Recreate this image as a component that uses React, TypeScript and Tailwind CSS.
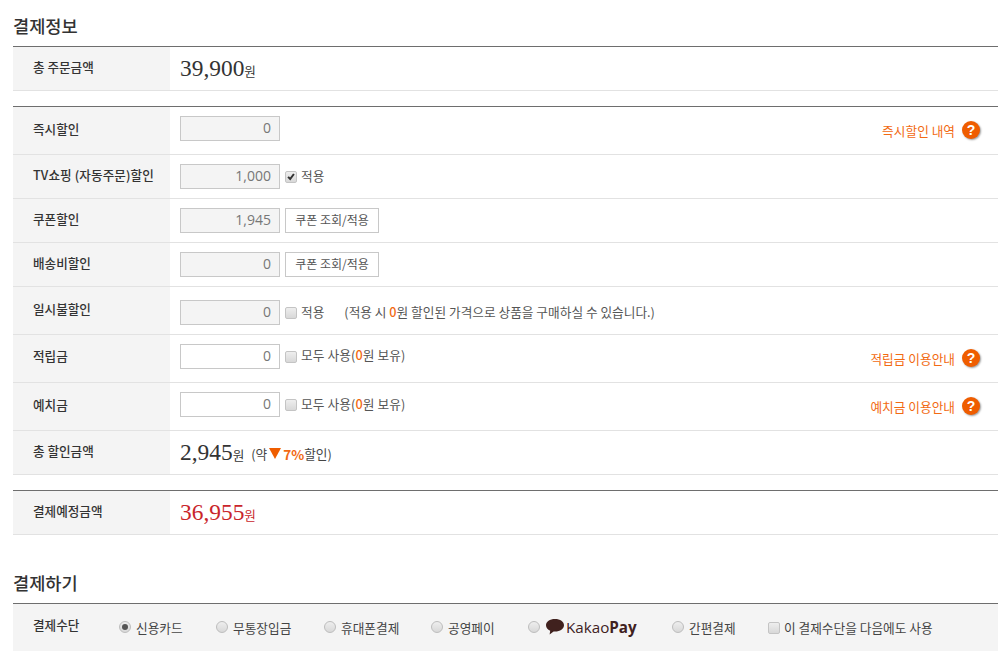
import React from 'react';

const FONT = "font-['Noto_Sans_CJK_KR','Noto_Sans',sans-serif]";

const Row = ({
  label,
  h,
  lift = '-mt-[3px]',
  shift = '',
  right,
  children,
}: {
  label: string;
  h: string;
  lift?: string;
  shift?: string;
  right?: React.ReactNode;
  children: React.ReactNode;
}) => (
  <div className={`flex ${h} border-b border-[#e2e2e2]`}>
    <div className="w-[157px] shrink-0 bg-[#f4f4f4] pl-[20px] pt-[1px] flex items-center text-[12.6px] font-medium text-[#333]">
      <span className={lift}>{label}</span>
    </div>
    <div className="flex-1 flex items-center pl-[10px] pr-[18px] min-w-0">
      <div className={`flex items-center ${shift}`}>{children}</div>
      {right}
    </div>
  </div>
);

const Amount = ({ value, disabled = true }: { value: string; disabled?: boolean }) => (
  <div
    className={`w-[100px] h-[25px] shrink-0 border border-[#c8c8c8] flex items-center justify-end pr-[8px] pb-[3px] text-[14px] text-[#777] font-['Open_Sans',sans-serif] ${
      disabled ? 'bg-[#f4f4f4]' : 'bg-white'
    }`}
  >
    {value}
  </div>
);

const Check = ({ checked }: { checked?: boolean }) => (
  <span className="ml-[5px] mr-[4px] w-[12px] h-[12px] shrink-0 rounded-[2px] border border-[#c4c4c4] bg-gradient-to-b from-[#eeeeee] to-[#d8d8d8] flex items-center justify-center">
    {checked && (
      <svg viewBox="0 0 12 12" className="w-[11px] h-[11px]">
        <path d="M2.5 6.5 L5 9 L9.5 3" fill="none" stroke="#333" strokeWidth="2.4" />
      </svg>
    )}
  </span>
);

const CouponBtn = () => (
  <div className="ml-[5px] w-[94px] h-[25px] pb-[2px] border border-[#c8c8c8] bg-white flex items-center justify-center text-[12px] text-[#555]">
    쿠폰 조회/적용
  </div>
);

const Help = ({ text }: { text: string }) => (
  <div className="ml-auto flex items-center text-[12.7px] text-[#f26a12]">
    <span>{text}</span>
    <span className="ml-[7px] w-[18px] h-[18px] rounded-full bg-[#ef5d00] shadow-[1px_1px_2px_rgba(0,0,0,0.4)] flex items-center justify-center text-white text-[14px] font-bold font-['Liberation_Sans',sans-serif]">
      ?
    </span>
  </div>
);

const Won = ({ value, red }: { value: string; red?: boolean }) => (
  <span className={`mt-[1px] flex items-baseline ${red ? 'text-[#c9252b]' : 'text-[#333]'}`}>
    <span className="text-[23.4px] font-['Liberation_Serif',serif]">{value}</span>
    <span className="text-[12.6px]">원</span>
  </span>
);

const Radio = ({ label, checked, w }: { label: React.ReactNode; checked?: boolean; w: string }) => (
  <div className={`flex items-center ${w} shrink-0`}>
    <span className="w-[12px] h-[12px] rounded-full border border-[#bdbdbd] bg-gradient-to-b from-[#eee] to-[#d8d8d8] flex items-center justify-center shrink-0">
      {checked && <span className="w-[6px] h-[6px] rounded-full bg-[#555]" />}
    </span>
    <span className="ml-[5px] text-[12.7px] text-[#444]">{label}</span>
  </div>
);

const KakaoPay = () => (
  <span className="flex items-center text-[#40211e]">
    <svg viewBox="0 0 20 18" className="w-[20px] h-[18px] mr-[1px]">
      <path d="M10 1C4.8 1 1 3.7 1 7.3c0 2.4 1.7 4.4 4.2 5.5L4.6 16.6 8.6 13.5c.5.1 1 .1 1.4.1 5.2 0 9-2.7 9-6.3S15.2 1 10 1z" fill="#40211e" />
    </svg>
    <span className="text-[15.2px] font-['Open_Sans',sans-serif] font-medium">
      Kakao<span className="font-bold">Pay</span>
    </span>
  </span>
);

export default function App() {
  return (
    <div className={`w-[1006px] h-[666px] overflow-hidden bg-white pl-[13px] pr-[8px] ${FONT}`}>
      <h2 className="h-[46px] pt-[14px] text-[17.6px] leading-[24px] font-medium text-[#333]">결제정보</h2>
      <div className="border-t border-[#6e6e6e]">
        <Row label="총 주문금액" h="h-[44px]">
          <Won value="39,900" />
        </Row>
      </div>

      <div className="mt-[15px] border-t border-[#6e6e6e]">
        <Row label="즉시할인" h="h-[48px]" shift="pb-[4px]" right={<Help text="즉시할인 내역" />}>
          <Amount value="0" />
        </Row>
        <Row label="TV쇼핑 (자동주문)할인" h="h-[44px]" lift="-mt-[4px] tracking-[0.1px]">
          <Amount value="1,000" />
          <Check checked />
          <span className="text-[12.7px] text-[#555] -mt-[1px]">적용</span>
        </Row>
        <Row label="쿠폰할인" h="h-[44px]" lift="-mt-[4px]">
          <Amount value="1,945" />
          <CouponBtn />
        </Row>
        <Row label="배송비할인" h="h-[44px]">
          <Amount value="0" />
          <CouponBtn />
        </Row>
        <Row label="일시불할인" h="h-[48px]" shift="pt-[4px]">
          <Amount value="0" />
          <Check />
          <span className="text-[12.7px] text-[#555] -mt-[1px]">적용</span>
          <span className="ml-[20px] text-[12.7px] text-[#555] -mt-[1px]">
            (적용 시 <b className="text-[#f26a12] font-medium">0</b>원 할인된 가격으로 상품을 구매하실 수 있습니다.)
          </span>
        </Row>
        <Row label="적립금" h="h-[48px]" lift="-mt-[6px]" shift="pb-[4px]" right={<Help text="적립금 이용안내" />}>
          <Amount value="0" disabled={false} />
          <Check />
          <span className="text-[12.7px] text-[#555] -mt-[3px] tracking-[0.1px]">
            모두 사용(<b className="text-[#f26a12] font-medium">0</b>원 보유)
          </span>
        </Row>
        <Row label="예치금" h="h-[48px]" shift="pb-[4px]" right={<Help text="예치금 이용안내" />}>
          <Amount value="0" disabled={false} />
          <Check />
          <span className="text-[12.7px] text-[#555] -mt-[1px] tracking-[0.1px]">
            모두 사용(<b className="text-[#f26a12] font-medium">0</b>원 보유)
          </span>
        </Row>
        <Row label="총 할인금액" h="h-[44px]">
          <Won value="2,945" />
          <span className="ml-[7px] mt-[3px] flex items-center text-[12.7px] text-[#444]">
            (약
            <span className="mx-[2px] w-0 h-0 border-x-[6.5px] border-x-transparent border-t-[11px] border-t-[#ef5d00]" />
            <b className="text-[13.5px] text-[#f26a12] font-bold">7%</b>할인)
          </span>
        </Row>
      </div>

      <div className="mt-[15px] border-t border-[#6e6e6e]">
        <Row label="결제예정금액" h="h-[44px]">
          <Won value="36,955" red />
        </Row>
      </div>

      <h2 className="h-[68px] pt-[36px] text-[17.6px] leading-[24px] font-medium text-[#333]">결제하기</h2>
      <div className="border-t border-[#6e6e6e] h-[48px] bg-[#f4f4f4] flex items-center">
        <div className="w-[106px] pl-[20px] text-[12.6px] font-medium text-[#333] -mt-[4px]">결제수단</div>
        <Radio label="신용카드" checked w="w-[97px]" />
        <Radio label="무통장입금" w="w-[108px]" />
        <Radio label="휴대폰결제" w="w-[107px]" />
        <Radio label="공영페이" w="w-[97px]" />
        <Radio label={<KakaoPay />} w="w-[144px]" />
        <Radio label="간편결제" w="w-[91px]" />
        <Check />
        <span className="text-[12.7px] text-[#444]">이 결제수단을 다음에도 사용</span>
      </div>
    </div>
  );
}
